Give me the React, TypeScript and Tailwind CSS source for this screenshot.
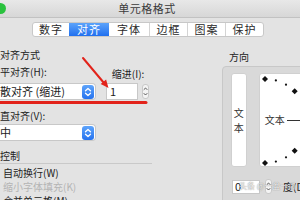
const tabs = [
  { label: "数字", w: "w-[36px]" },
  { label: "对齐", w: "w-[40px]", active: true },
  { label: "字体", w: "w-[40px]" },
  { label: "边框", w: "w-[38px]" },
  { label: "图案", w: "w-[38px]" },
  { label: "保护", w: "w-[38px]" },
];

function BlueStepper() {
  return (
    <div className="ml-auto mr-[1px] w-[12px] h-[14px] rounded-[3px] bg-gradient-to-b from-[#5ea4fb] to-[#2572ee] flex items-center justify-center">
      <svg width="8" height="10" viewBox="0 0 8 10" fill="none" stroke="#fff" strokeWidth="1.3" strokeLinecap="round" strokeLinejoin="round">
        <path d="M1.5 3.8 4 1.5l2.5 2.3" />
        <path d="M1.5 6.2 4 8.5l2.5-2.3" />
      </svg>
    </div>
  );
}

function SmallStepper() {
  return (
    <div className="w-[7px] h-[15px] rounded-[3px] bg-[#f4f4f4] border border-[#c9c9c9] flex items-center justify-center">
      <svg width="5" height="11" viewBox="0 0 5 11" fill="none" stroke="#555" strokeWidth="1" strokeLinecap="round" strokeLinejoin="round">
        <path d="M1 3.5 2.5 2 4 3.5" />
        <path d="M1 7.5 2.5 9 4 7.5" />
      </svg>
    </div>
  );
}

function Dial() {
  const cx = 5;
  const cy = 47;
  const r = 42;
  const angles = [90, 75, 60, 45, -45, -60, -75, -90];
  return (
    <div className="relative w-[60px] h-[94px] bg-white rounded-[3px] border border-[#d0d0d0] flex items-center pl-[5px]">
      <svg className="absolute left-0 top-0" width="60" height="94" viewBox="0 0 60 94">
        {angles.map((a) => {
          const rad = (a * Math.PI) / 180;
          const x = cx + r * Math.cos(rad);
          const y = cy - r * Math.sin(rad);
          return a % 45 === 0 ? (
            <path key={a} d={`M${x} ${y - 3}L${x + 3} ${y}L${x} ${y + 3}L${x - 3} ${y}Z`} fill="#111" />
          ) : (
            <circle key={a} cx={x} cy={y} r="1.1" fill="#111" />
          );
        })}
      </svg>
      <span className="text-[10px] leading-[12px] text-[#333]">文本</span>
      <div className="ml-[2px] w-[14px] h-px bg-[#333]" />
    </div>
  );
}

export default function App() {
  return (
    <div className="relative w-[300px] h-[200px] overflow-hidden bg-[#e3e3e3] text-[#222] font-['Noto_Sans_CJK_SC',sans-serif]">
      {/* title bar */}
      <div className="relative h-[18px] flex items-center justify-center bg-gradient-to-b from-[#e8e8e8] to-[#d7d7d7] border-b border-[#c2c2c2]">
        <div className="absolute left-[-5px] top-[3px] w-[11px] h-[11px] rounded-full bg-[#2ac23e]" />
        <span className="mr-[6px] text-[11px] leading-none tracking-[0.5px] text-[#3a3a3a]">单元格格式</span>
      </div>

      {/* tabs */}
      <div className="mt-[4px] pl-[32px] flex">
        <div className="flex h-[15px] bg-white border border-[#c8c8c8] rounded-[3px] overflow-hidden">
          {tabs.map((t, i) => (
            <div
              key={t.label}
              className={`${t.w} flex items-center justify-center text-[11px] leading-none tracking-[1px] ${
                t.active
                  ? "bg-gradient-to-b from-[#5ca3fa] to-[#1f6fef] text-white"
                  : "text-[#2a2a2a]"
              } ${i > 0 && !t.active && !tabs[i - 1].active ? "border-l border-[#d4d4d4]" : ""}`}
            >
              {t.label}
            </div>
          ))}
        </div>
      </div>

      <div className="flex">
        {/* left column */}
        <div className="w-[152px] shrink-0 text-[10px]">
          <div className="mt-[12px] leading-[12px]">对齐方式</div>

          <div className="mt-[5px] flex h-[14px]">
            <span className="leading-[12px]">平对齐(H):</span>
            <span className="ml-[65px] pt-[2px] leading-[12px]">缩进(I):</span>
          </div>

          <div className="mt-[3px] flex items-center h-[17px]">
            <div className="w-[96px] h-[17px] bg-white border border-l-0 border-[#c8c8c8] rounded-r-[4px] flex items-center">
              <span className="text-[11px] leading-none">散对齐 (缩进)</span>
              <BlueStepper />
            </div>
            <div className="ml-[10px] w-[32px] h-[17px] bg-white border border-[#c8c8c8] flex items-center pl-[3px] text-[11px] leading-none">
              1
            </div>
            <div className="ml-[4px]">
              <SmallStepper />
            </div>
          </div>

          <div className="mt-[10px] leading-[12px]">直对齐(V):</div>

          <div className="mt-[2px] w-[96px] h-[17px] bg-white border border-l-0 border-[#c8c8c8] rounded-r-[4px] flex items-center">
            <span className="text-[11px] leading-none">中</span>
            <BlueStepper />
          </div>

          <div className="mt-[9px] h-[14px] leading-[12px] border-b border-[#c9c9c9]">控制</div>

          <div className="pl-[3px]">
            <div className="mt-[3px] leading-[12px]">自动换行(W)</div>
            <div className="mt-[2px] leading-[12px] text-[#b4b4b4]">缩小字体填充(K)</div>
            <div className="mt-[2px] leading-[12px]">合并单元格(M)</div>
          </div>
        </div>

        {/* right column */}
        <div className="pl-[70px] shrink-0">
          <div className="mt-[14px] ml-[7px] text-[10px] leading-[12px]">方向</div>
          <div className="mt-[3px] w-[90px] h-[140px] bg-[#d9d9d9] border border-[#c8c8c8] rounded-[4px] pt-[6px] pl-[8px]">
            <div className="flex gap-[12px]">
              <div className="w-[18px] h-[94px] bg-white rounded-[3px] border border-[#d0d0d0] flex flex-col items-center justify-center text-[10px] leading-[15px] text-[#333]">
                <span>文</span>
                <span>本</span>
              </div>
              <Dial />
            </div>
            <div className="mt-[12px] flex items-center">
              <div className="ml-[1px] w-[28px] h-[14px] bg-white border border-[#c8c8c8] flex items-center pl-[2px] text-[11px] leading-none">
                0
              </div>
              <div className="ml-[5px]">
                <SmallStepper />
              </div>
              <span className="ml-[11px] text-[10px] leading-none">度(D)</span>
            </div>
          </div>
        </div>
      </div>

      {/* watermark */}
      <div className="absolute left-[239px] top-[182px] text-[8px] leading-none text-white/90 [text-shadow:0_0_1px_#555]">
        头条 @一盆一瓜
      </div>

      {/* red annotation */}
      <svg className="absolute left-0 top-0 pointer-events-none" width="300" height="200" viewBox="0 0 300 200">
        <path d="M0 102.5H146" stroke="#e2231b" strokeWidth="3" strokeLinecap="round" fill="none" />
        <path d="M83 58 104 83" stroke="#e2231b" strokeWidth="2" strokeLinecap="round" fill="none" />
        <path d="M108.5 88 100.7 84 106.1 79.6Z" fill="#e2231b" />
      </svg>
    </div>
  );
}
